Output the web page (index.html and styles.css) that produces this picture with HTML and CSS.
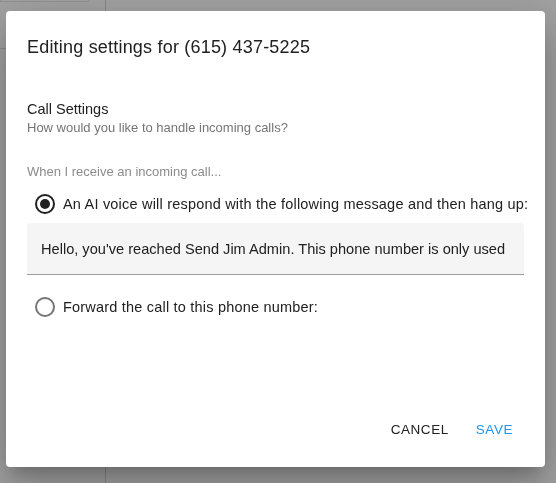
FILE: index.html
```html
<!DOCTYPE html>
<html>
<head>
<meta charset="utf-8">
<link rel="stylesheet" href="styles.css">
</head>
<body>
<div class="page">
  <aside class="sidebar">
    <div class="side-card"></div>
    <div class="side-rule"></div>
  </aside>
  <main class="main"></main>
</div>
<div class="overlay">
  <div class="dialog">
    <h2 class="title">Editing settings for (615) 437-5225</h2>
    <div class="content">
      <div class="heading">Call Settings</div>
      <div class="sub">How would you like to handle incoming calls?</div>
      <div class="hint">When I receive an incoming call...</div>
      <label class="radio-row">
        <span class="radio checked"><span class="dot"></span></span>
        <span class="radio-label">An AI voice will respond with the following message and then hang up:</span>
      </label>
      <div class="field">
        <div class="field-text">Hello, you've reached Send Jim Admin. This phone number is only used</div>
      </div>
      <label class="radio-row second">
        <span class="radio"></span>
        <span class="radio-label">Forward the call to this phone number:</span>
      </label>
    </div>
    <div class="actions">
      <button class="btn cancel">Cancel</button>
      <button class="btn save">Save</button>
    </div>
  </div>
</div>
</body>
</html>
```

FILE: styles.css
```css
* { box-sizing: border-box; }
html, body { margin: 0; height: 100%; }
body {
  font-family: "Liberation Sans", Arial, sans-serif;
  background: #fff;
  overflow: hidden;
}
.page {
  display: flex;
  height: 100%;
}
.sidebar {
  width: 106px;
  border-right: 1px solid #d6d6d6;
}
.side-card {
  width: 89px;
  height: 2px;
  border: 1px solid #e6e6e6;
  border-top: none;
  border-radius: 0 0 4px 0;
}
.side-rule {
  margin-top: 46px;
  width: 8px;
  border-top: 1px solid #e0e0e0;
}
.main { flex: 1; }

.overlay {
  position: fixed;
  inset: 0;
  background: rgba(0, 0, 0, 0.37);
  padding: 11px 0 0 6px;
}
.dialog {
  width: 539px;
  height: 456px;
  background: #fff;
  border-radius: 4px;
  display: flex;
  flex-direction: column;
  box-shadow: 0 11px 15px -7px rgba(0,0,0,.2), 0 24px 38px 3px rgba(0,0,0,.14), 0 9px 46px 8px rgba(0,0,0,.12);
  overflow: hidden;
}
.title {
  margin: 0;
  padding: 24px 21px 0;
  font-size: 18px;
  letter-spacing: 0.2px;
  line-height: 24px;
  font-weight: 400;
  color: #212121;
}
.content {
  padding: 0 21px;
  margin-top: 40px;
  display: flex;
  flex-direction: column;
}
.heading {
  font-size: 14.5px;
  line-height: 20px;
  color: #212121;
}
.sub {
  font-size: 13px;
  line-height: 17px;
  color: #757575;
}
.hint {
  margin-top: 28px;
  font-size: 13px;
  line-height: 16px;
  color: #8c8c8c;
}
.radio-row {
  display: flex;
  align-items: center;
  height: 36px;
  margin-top: 6px;
  padding-left: 8px;
}
.radio-row.second { margin-top: 14px; }
.radio {
  width: 20px;
  height: 20px;
  border: 2px solid #757575;
  border-radius: 50%;
  display: flex;
  align-items: center;
  justify-content: center;
  flex: none;
}
.radio.checked { border-color: #212121; }
.dot {
  width: 10px;
  height: 10px;
  border-radius: 50%;
  background: #212121;
}
.radio-label {
  margin-left: 8px;
  font-size: 14.5px;
  letter-spacing: 0.2px;
  color: #212121;
  white-space: nowrap;
}
.field {
  margin-top: 1px;
  height: 52px;
  background: #f5f5f5;
  border-radius: 4px 4px 0 0;
  border-bottom: 1px solid #9e9e9e;
  padding: 0 12px 0 14px;
  display: flex;
  align-items: center;
  overflow: hidden;
}
.field-text {
  font-size: 14.6px;
  color: #212121;
  white-space: nowrap;
  padding-top: 1px;
}
.actions {
  margin-top: auto;
  display: flex;
  justify-content: flex-end;
  gap: 11px;
  padding: 0 24px 20px;
}
.btn {
  background: none;
  border: none;
  font-family: inherit;
  font-size: 13.5px;
  letter-spacing: 0.55px;
  text-transform: uppercase;
  height: 36px;
  padding: 0 8px;
  cursor: pointer;
}
.cancel { color: #212121; }
.save { color: #2196f3; }
```
